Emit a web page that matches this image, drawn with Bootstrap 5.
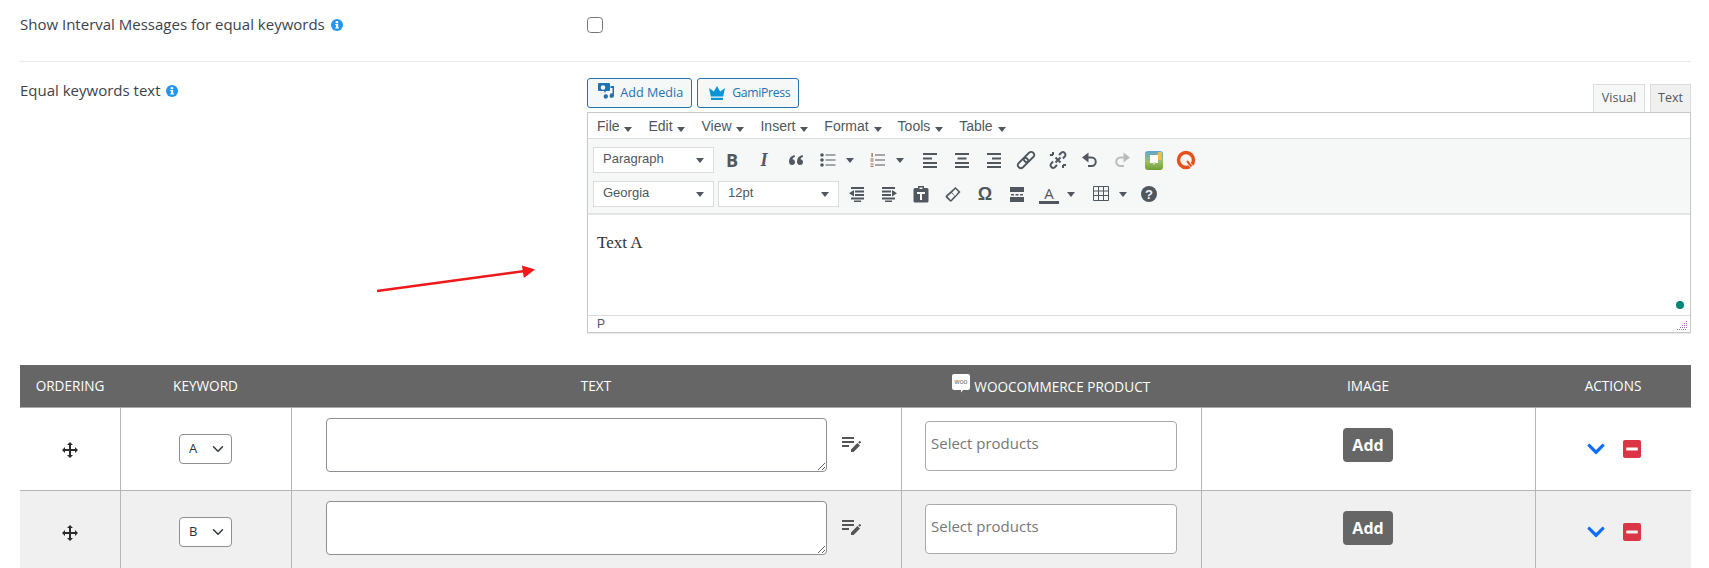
<!DOCTYPE html>
<html lang="en">
<head>
  <meta charset="UTF-8">
  <title>Equal keywords settings</title>
  <link href="https://cdn.jsdelivr.net/npm/bootstrap@5.3.3/dist/css/bootstrap.min.css" rel="stylesheet">
  <style>
    html, body { overflow: hidden; }
    body { font-family: "Open Sans", sans-serif; font-size: 15px; color: #3c434a; background: #fff; }
    .page-wrap { padding: 0 18px 0 20px; position: relative; }

    /* option rows */
    .opt-first { height: 62px; border-bottom: 1px solid #e8e8e8; padding-top: 14px; }
    .opt-second { padding-top: 16px; }
    .opt-label { width: 567px; flex: none; line-height: 20px; }
    .opt-second .opt-label { padding-top: 2px; }
    .info-ico { width: 12px; height: 12px; vertical-align: -1px; margin-left: 2px; }
    .plain-check { width: 16px; height: 16px; margin: 3px 0 0; border: 1px solid #777; border-radius: 4px; }

    /* media buttons and tabs */
    .media-bar { height: 34px; }
    .media-btns { gap: 5px; }
    .tab-set { gap: 5px; }
    .wp-btn { height: 30px; padding: 0 8px 0 9px; font-size: 12.6px; line-height: 28px; color: #2271b1; background: #f6f7f7; border: 1px solid #2271b1; border-radius: 3px; }
    .wp-btn.gami { font-size: 12.2px; letter-spacing: -.3px; }
    .wp-btn svg { vertical-align: -4px; }
    .crown-ico { margin-right: 5px; vertical-align: -3px; }
    .tab-btn { width: 41px; height: 29px; margin-top: 6px; font-size: 12.5px; line-height: 26px; text-align: center; color: #50575e; background: #f0f0f1; border: 1px solid #dcdcde; border-bottom: 0; }
    .tab-btn.on { width: 52px; background: #f6f7f7; border-color: #dcdcde; }

    /* editor */
    .ed-box { border: 1px solid #c9c9c9; box-shadow: 0 1px 1px rgba(0,0,0,.08); position: relative; background: #fff; }
    .ed-menu { height: 26px; border-bottom: 1px solid #ddd; padding-left: 9px; font-family: "Liberation Sans", sans-serif; font-size: 14px; color: #50575e; line-height: 26px; gap: 16px; }
    .drop-tri { display: inline-block; width: 0; height: 0; border: 4px solid transparent; border-top: 5px solid #50575e; border-bottom: 0; vertical-align: 0; }
    .ed-menu .drop-tri { margin-left: 1px; vertical-align: -1px; }
    .ed-tools { height: 76px; background: #f6f7f7; border-bottom: 2px solid #e4e4e4; padding: 8px 0 0 5px; color: #50575e; font-family: "Liberation Sans", sans-serif; }
    .tool-line { height: 26px; margin-bottom: 8px; }
    .ed-pick { height: 26px; width: 121px; background: #fff; border: 1px solid #dcdcde; font-size: 13px; line-height: 22px; padding: 0 9px; margin-right: 4px; justify-content: space-between; align-items: center; }
    .ed-pick span { padding-bottom: 2px; }
    .ed-pick + .tool-btn { margin-left: -2px; }
    .tool-btn { width: 32px; height: 26px; flex: none; display: flex; align-items: center; justify-content: center; }
    .tool-btn.has-drop { justify-content: flex-start; padding-left: 6px; }
    .tool-btn.w50 { width: 50px; }
    .tool-btn.w51 { width: 52px; }
    .tool-btn.w48 { width: 48px; }
    .tool-btn .drop-tri { margin-left: 8px; }
    .tool-btn svg { width: 20px; height: 20px; flex: none; }
    .glyph-b { font: 700 18px "Open Sans", sans-serif; }
    .glyph-i { font: italic 700 18px "Liberation Serif", serif; }
    .glyph-o { font: 700 18px "Liberation Sans", sans-serif; }
    .glyph-a { display: inline-block; width: 20px; text-align: center; font: 400 15px/16px "Open Sans", sans-serif; border-bottom: 3px solid #50575e; }
    .ed-body { height: 100px; padding: 16px 9px; font-family: "Liberation Serif", serif; font-size: 17px; line-height: 24px; color: #333; position: relative; }
    .grammar-dot { position: absolute; right: 6px; bottom: 6px; width: 8px; height: 8px; border-radius: 50%; background: #00897b; }
    .ed-status { height: 17px; border-top: 1px solid #ddd; padding-left: 9px; font: 12px/16px "Liberation Sans", sans-serif; color: #50575e; position: relative; }
    .grip-ico { position: absolute; right: 3px; bottom: 2px; }

    .arrow-note { position: absolute; left: 370px; top: 262px; pointer-events: none; }

    /* keywords table */
    .kw-table { table-layout: fixed; width: 1671px; margin: 32px 0 0; border-collapse: collapse; }
    .kw-table th { height: 42px; padding: 0; background: #666; color: #fff; font-weight: 400; font-size: 13.6px; text-align: center; vertical-align: middle; border-bottom: 1px solid #aaa; }
    .kw-table td { height: 83px; padding: 0; text-align: center; vertical-align: middle; border: 1px solid #b5b5b5; border-top: 0; background: #fff; }
    .kw-table tr.alt td { background: #f0f0f0; }
    .kw-table td:first-child { border-left: 0; }
    .kw-table td:last-child { border-right: 0; }
    .c-order { width: 100px; } .c-key { width: 171px; } .c-text { width: 610px; }
    .c-prod { width: 300px; } .c-img { width: 334px; } .c-act { width: 156px; }
    .woo-ico { vertical-align: -1px; margin-right: 1px; }
    .key-select { width: 53px; height: 30px; padding: 0 20px 0 9px; margin: 0 auto; font-size: 13px; color: #2c3338; border: 1px solid #8c8f94; border-radius: 4px; background-position: right 5px center; background-size: 16px 12px; }
    .txt-wrap { padding: 0 0 7px 34px; gap: 15px; }
    .txt-area { width: 501px; height: 54px; flex: none; border: 1px solid #8c8f94; border-radius: 4px; }
    .prod-box { width: 252px; height: 50px; margin: 0 auto 5px; border: 1px solid #aaa; border-radius: 4px; background: #fff; text-align: left; padding: 10px 5px; font-size: 15px; line-height: 22px; color: #777; }
    .add-btn { width: 50px; height: 34px; padding: 0; margin-bottom: 7px; font-size: 16px; font-weight: 700; color: #fff; background: #666; border: 0; border-radius: 4px; }
    .act-wrap { gap: 18px; padding-left: 51px; }
  </style>
</head>
<body>
  <svg width="0" height="0" class="position-absolute">
    <symbol id="i-info" viewBox="0 0 12 12"><circle cx="6" cy="6" r="6" fill="#2196f3"/><rect x="4.600" y="2.200" width="2.600" height="2" fill="#fff"/><path d="M4.200 5h3v3.600h.8v1H4.200v-1H5V6h-.8z" fill="#fff"/></symbol>
    <symbol id="i-move" viewBox="0 0 16 16"><g fill="#2b2b2b"><rect x="7" y="2" width="2" height="12"/><rect x="2" y="7" width="12" height="2"/><path d="M8 0l3 3H5zM8 16l-3-3h6zM0 8l3-3v6zM16 8l-3 3V5z"/></g></symbol>
    <symbol id="i-notes" viewBox="0 0 19 16"><g fill="#555"><rect x="0" y="0" width="12" height="2"/><rect x="0" y="4" width="12" height="2"/><rect x="0" y="8" width="7" height="2"/><path d="M9 15v-2.600l6.400-6.400 2.600 2.600L11.600 15zM16.200 5.200l1-1q.5-.4 1 0l.6.6q.4.5 0 1l-1 1z"/></g></symbol>
    <symbol id="i-down" viewBox="0 0 448 512"><path fill="#0d6efd" d="M207.029 381.476L12.686 187.132c-9.373-9.373-9.373-24.569 0-33.941l22.667-22.667c9.357-9.357 24.522-9.375 33.901-.04L224 284.505l154.745-154.021c9.379-9.335 24.544-9.317 33.901.04l22.667 22.667c9.373 9.373 9.373 24.569 0 33.941L240.971 381.476c-9.373 9.372-24.569 9.372-33.942 0z"/></symbol>
    <symbol id="i-minus" viewBox="0 0 448 448"><path fill="#dc3545" d="M400 0H48C21.500 0 0 21.500 0 48v352c0 26.500 21.500 48 48 48h352c26.500 0 48-21.500 48-48V48c0-26.500-21.500-48-48-48zM92 264c-6.600 0-12-5.400-12-12v-56c0-6.600 5.400-12 12-12h264c6.600 0 12 5.400 12 12v56c0 6.600-5.400 12-12 12H92z"/></symbol>
  </svg>

  <div class="page-wrap">
    <div class="opt-first d-flex">
      <div class="opt-label">Show Interval Messages for equal keywords <svg class="info-ico"><use href="#i-info"/></svg></div>
      <input class="form-check-input plain-check" type="checkbox" aria-label="Show interval messages">
    </div>

    <div class="opt-second d-flex">
      <div class="opt-label">Equal keywords text <svg class="info-ico"><use href="#i-info"/></svg></div>
      <div class="flex-grow-1">
        <div class="media-bar d-flex justify-content-between">
          <div class="media-btns d-flex">
            <button class="btn wp-btn" type="button">
              <svg width="20" height="20" viewBox="0 0 20 20"><path fill="#2271b1" d="M2 2h10a1 1 0 0 1 1 1v6a1 1 0 0 1-1 1h-3l-1 2-1-2H2a1 1 0 0 1-1-1V3a1 1 0 0 1 1-1zm4 2.200a2.300 2.300 0 1 0 0 4.600 2.300 2.300 0 0 0 0-4.600zM17 5v9.500a2.200 2.200 0 1 1-1.500-2V7h-2V5zM9.500 13.300a2.200 2.200 0 0 1 1.500 2.200 2.200 2.200 0 1 1-2.500-2.200z"/></svg>
              Add Media
            </button>
            <button class="btn wp-btn gami" type="button"><svg class="crown-ico" width="20" height="16" viewBox="0 0 20 16"><path fill="#0a95d6" d="M10 1l3.200 5.500L18 3l-1.800 8.500H3.800L2 3l4.800 3.500zM4 12.800h12V15H4z"/></svg>GamiPress</button>
          </div>
          <div class="tab-set d-flex">
            <div class="tab-btn on">Visual</div>
            <div class="tab-btn">Text</div>
          </div>
        </div>

        <div class="ed-box">
          <div class="ed-menu d-flex">
            <span>File <i class="drop-tri"></i></span>
            <span>Edit <i class="drop-tri"></i></span>
            <span>View <i class="drop-tri"></i></span>
            <span>Insert <i class="drop-tri"></i></span>
            <span>Format <i class="drop-tri"></i></span>
            <span>Tools <i class="drop-tri"></i></span>
            <span>Table <i class="drop-tri"></i></span>
          </div>

          <div class="ed-tools">
            <div class="tool-line d-flex">
              <div class="ed-pick d-flex"><span>Paragraph</span><i class="drop-tri"></i></div>
              <div class="tool-btn glyph-b">B</div>
              <div class="tool-btn glyph-i">I</div>
              <div class="tool-btn"><svg viewBox="0 0 20 20"><path fill="#50575e" d="M8.500 5C5 6 3 8 3 11.500 3 13.500 4.200 15 6 15s3-1.300 3-3-1.200-2.800-2.600-2.800c.4-1 1.200-1.800 2.600-2.400zM16.500 5c-3.500 1-5.500 3-5.500 6.500 0 2 1.200 3.500 3 3.500s3-1.300 3-3-1.200-2.800-2.600-2.800c.4-1 1.200-1.800 2.600-2.400z"/></svg></div>
              <div class="tool-btn w50 has-drop"><svg viewBox="0 0 20 20"><g fill="#50575e"><circle cx="4" cy="5" r="1.800"/><circle cx="4" cy="10" r="1.800"/><circle cx="4" cy="15" r="1.800"/><rect x="7.500" y="4.500" width="10" height="1"/><rect x="7.500" y="9.500" width="10" height="1"/><rect x="7.500" y="14.500" width="10" height="1"/></g></svg><i class="drop-tri"></i></div>
              <div class="tool-btn w51 has-drop"><svg viewBox="0 0 20 20"><g fill="#50575e"><rect x="7" y="4.500" width="10" height="1"/><rect x="7" y="9.500" width="10" height="1"/><rect x="7" y="14.500" width="10" height="1"/></g><g fill="#9a5a3c"><rect x="3.500" y="3" width="1.200" height="4"/><rect x="2.500" y="8.500" width="3" height="1"/><rect x="2.500" y="10.500" width="3" height="1"/><rect x="2.500" y="13.500" width="3" height="1"/><rect x="2.500" y="15.800" width="3" height="1"/></g></svg><i class="drop-tri"></i></div>
              <div class="tool-btn"><svg viewBox="0 0 20 20"><g fill="#50575e"><rect x="3" y="3" width="14" height="2"/><rect x="3" y="7.500" width="9" height="2"/><rect x="3" y="12" width="14" height="2"/><rect x="3" y="16" width="14" height="2"/></g></svg></div>
              <div class="tool-btn"><svg viewBox="0 0 20 20"><g fill="#50575e"><rect x="3" y="3" width="14" height="2"/><rect x="5.500" y="7.500" width="9" height="2"/><rect x="3" y="12" width="14" height="2"/><rect x="3" y="16" width="14" height="2"/></g></svg></div>
              <div class="tool-btn"><svg viewBox="0 0 20 20"><g fill="#50575e"><rect x="3" y="3" width="14" height="2"/><rect x="8" y="7.500" width="9" height="2"/><rect x="3" y="12" width="14" height="2"/><rect x="3" y="16" width="14" height="2"/></g></svg></div>
              <div class="tool-btn"><svg viewBox="0 0 20 20"><g fill="none" stroke="#50575e" stroke-width="1.800"><rect x="10" y="1" width="6" height="12" rx="3" transform="rotate(45 13 7)"/><rect x="4" y="7" width="6" height="12" rx="3" transform="rotate(45 7 13)"/></g></svg></div>
              <div class="tool-btn"><svg viewBox="0 0 20 20"><g fill="none" stroke="#50575e" stroke-width="2"><path d="M11 5l2.500-2.500q1.500-1 3 .3t.8 3L15 8.500M9 15l-2.500 2.500q-1.500 1-3-.3t-.8-3L5 11.500"/><path d="M5 2v3M2 5h3M15 18v-3M18 15h-3M7.500 7.500l5 5M12.500 7.500l-5 5"/></g></svg></div>
              <div class="tool-btn"><svg viewBox="0 0 20 20"><path fill="none" stroke="#50575e" stroke-width="2" d="M4 7.500h7.500a4.200 4.200 0 0 1 0 8.500H8"/><path fill="#50575e" d="M8.500 2.500v10L2 7.500z"/></svg></div>
              <div class="tool-btn"><svg viewBox="0 0 20 20"><path fill="none" stroke="#bbb" stroke-width="2" d="M16 7.500H8.500a4.200 4.200 0 0 0 0 8.500H12"/><path fill="#bbb" d="M11.500 2.500v10L18 7.500z"/></svg></div>
              <div class="tool-btn"><svg viewBox="0 0 20 20"><defs><linearGradient id="g-img" x1="0" y1="0" x2="0" y2="1"><stop offset="0" stop-color="#5aa7d6"/><stop offset=".55" stop-color="#9cc06a"/><stop offset="1" stop-color="#6f9e34"/></linearGradient></defs><rect x="1" y="1" width="18" height="19" rx="3" fill="url(#g-img)"/><rect x="14" y="2" width="4" height="8" fill="#e8c04a"/><path fill="#fff" d="M6 5h8v8H6z"/><path fill="#dbe8c8" d="M8 12h4l-2 3z"/></svg></div>
              <div class="tool-btn"><svg viewBox="0 0 20 20"><circle cx="10" cy="10" r="7.500" fill="none" stroke="#e8521a" stroke-width="3.500"/><path d="M11 11l5 6" stroke="#fff" stroke-width="3.500"/><path d="M11 11l4.500 5.500" stroke="#e8521a" stroke-width="2"/></svg></div>
            </div>
            <div class="tool-line d-flex">
              <div class="ed-pick d-flex"><span>Georgia</span><i class="drop-tri"></i></div>
              <div class="ed-pick d-flex"><span>12pt</span><i class="drop-tri"></i></div>
              <div class="tool-btn"><svg viewBox="0 0 20 20"><g fill="#50575e"><rect x="4" y="3" width="13" height="2"/><rect x="8" y="6.500" width="9" height="2"/><rect x="8" y="10" width="9" height="2"/><rect x="4" y="13.500" width="13" height="2"/><rect x="7" y="16.500" width="7" height="1.500"/><path d="M7 6v6.500L2 9.200z"/></g></svg></div>
              <div class="tool-btn"><svg viewBox="0 0 20 20"><g fill="#50575e"><rect x="3" y="3" width="13" height="2"/><rect x="3" y="6.500" width="9" height="2"/><rect x="3" y="10" width="9" height="2"/><rect x="3" y="13.500" width="13" height="2"/><rect x="6" y="16.500" width="7" height="1.500"/><path d="M13 6v6.500l5-3.300z"/></g></svg></div>
              <div class="tool-btn"><svg viewBox="0 0 20 20"><path fill="#50575e" fill-rule="evenodd" d="M7 2h6v2h3a1.500 1.500 0 0 1 1.500 1.500V17a1.500 1.500 0 0 1-1.500 1.500H4A1.500 1.500 0 0 1 2.500 17V5.500A1.500 1.500 0 0 1 4 4h3zM8.500 3.500V5h3V3.500zM6 8v2h3v6h2v-6h3V8z"/></svg></div>
              <div class="tool-btn"><svg viewBox="0 0 20 20"><path fill="#50575e" fill-rule="evenodd" d="M12.500 3l5 5-9 9.500H7L3 13.500q-1-1 0-2zM12.500 5L9 8.500l3 3.500 3.300-4z"/><path fill="#f6f7f7" d="M4.500 12.500l4-3.500 3 3L7.800 16z"/></svg></div>
              <div class="tool-btn glyph-o">&#937;</div>
              <div class="tool-btn"><svg viewBox="0 0 20 20"><g fill="#50575e"><rect x="3" y="3" width="14" height="5"/><rect x="3" y="13" width="14" height="5"/><rect x="4" y="10" width="3" height="1.500"/><rect x="8.500" y="10" width="3" height="1.500"/><rect x="13" y="10" width="3" height="1.500"/></g></svg></div>
              <div class="tool-btn w51 has-drop"><span class="glyph-a">A</span><i class="drop-tri"></i></div>
              <div class="tool-btn w48 has-drop"><svg viewBox="0 0 20 20"><path fill="none" stroke="#50575e" d="M2.500 2.500h15v14h-15zM2.500 7h15M2.500 11.500h15M7.500 2.500v14M12.500 2.500v14"/></svg><i class="drop-tri"></i></div>
              <div class="tool-btn"><svg viewBox="0 0 20 20"><circle cx="10" cy="10" r="8" fill="#50575e"/><text x="10" y="14.500" text-anchor="middle" font-family="Liberation Sans" font-weight="700" font-size="13" fill="#f6f7f7">?</text></svg></div>
            </div>
          </div>

          <div class="ed-body">Text A<span class="grammar-dot"></span></div>
          <div class="ed-status">P
            <svg class="grip-ico" width="10" height="10" viewBox="0 0 10 10"><path stroke="#a96bb5" stroke-dasharray="1 1" d="M0 9.500h10M3 7.500h7M5 5.500h5M7 3.500h3M9 1.500h1"/></svg>
          </div>
        </div>
      </div>
    </div>

    <svg class="arrow-note" width="170" height="34" viewBox="0 0 170 34"><path d="M7 29L155 9" stroke="#f01818" stroke-width="2.500"/><path d="M165 7.500L152 3.500l1.800 12.500z" fill="#f01818"/></svg>

    <table class="kw-table">
      <colgroup><col class="c-order"><col class="c-key"><col class="c-text"><col class="c-prod"><col class="c-img"><col class="c-act"></colgroup>
      <thead>
        <tr>
          <th>ORDERING</th>
          <th>KEYWORD</th>
          <th>TEXT</th>
          <th>
            <svg class="woo-ico" width="18" height="19" viewBox="0 0 18 19"><path fill="#fff" d="M2 0h14a2 2 0 0 1 2 2v12a2 2 0 0 1-2 2h-5l-2 2.500V16H2a2 2 0 0 1-2-2V2a2 2 0 0 1 2-2z"/><text x="9" y="10" text-anchor="middle" font-size="7" font-family="Liberation Sans" fill="#666">woo</text></svg>
            WOOCOMMERCE PRODUCT
          </th>
          <th>IMAGE</th>
          <th>ACTIONS</th>
        </tr>
      </thead>
      <tbody>
        <tr>
          <td><svg width="16" height="16"><use href="#i-move"/></svg></td>
          <td><select class="form-select key-select" aria-label="Keyword"><option>A</option></select></td>
          <td><div class="txt-wrap d-flex align-items-center"><textarea class="form-control txt-area" aria-label="Text"></textarea><svg width="19" height="16"><use href="#i-notes"/></svg></div></td>
          <td><div class="prod-box">Select products</div></td>
          <td><button class="btn add-btn" type="button">Add</button></td>
          <td><div class="act-wrap d-flex align-items-center"><svg width="18" height="20"><use href="#i-down"/></svg><svg width="18" height="18"><use href="#i-minus"/></svg></div></td>
        </tr>
        <tr class="alt">
          <td><svg width="16" height="16"><use href="#i-move"/></svg></td>
          <td><select class="form-select key-select" aria-label="Keyword"><option>B</option></select></td>
          <td><div class="txt-wrap d-flex align-items-center"><textarea class="form-control txt-area" aria-label="Text"></textarea><svg width="19" height="16"><use href="#i-notes"/></svg></div></td>
          <td><div class="prod-box">Select products</div></td>
          <td><button class="btn add-btn" type="button">Add</button></td>
          <td><div class="act-wrap d-flex align-items-center"><svg width="18" height="20"><use href="#i-down"/></svg><svg width="18" height="18"><use href="#i-minus"/></svg></div></td>
        </tr>
      </tbody>
    </table>
  </div>

  <script src="https://cdn.jsdelivr.net/npm/bootstrap@5.3.3/dist/js/bootstrap.bundle.min.js"></script>
</body>
</html>
